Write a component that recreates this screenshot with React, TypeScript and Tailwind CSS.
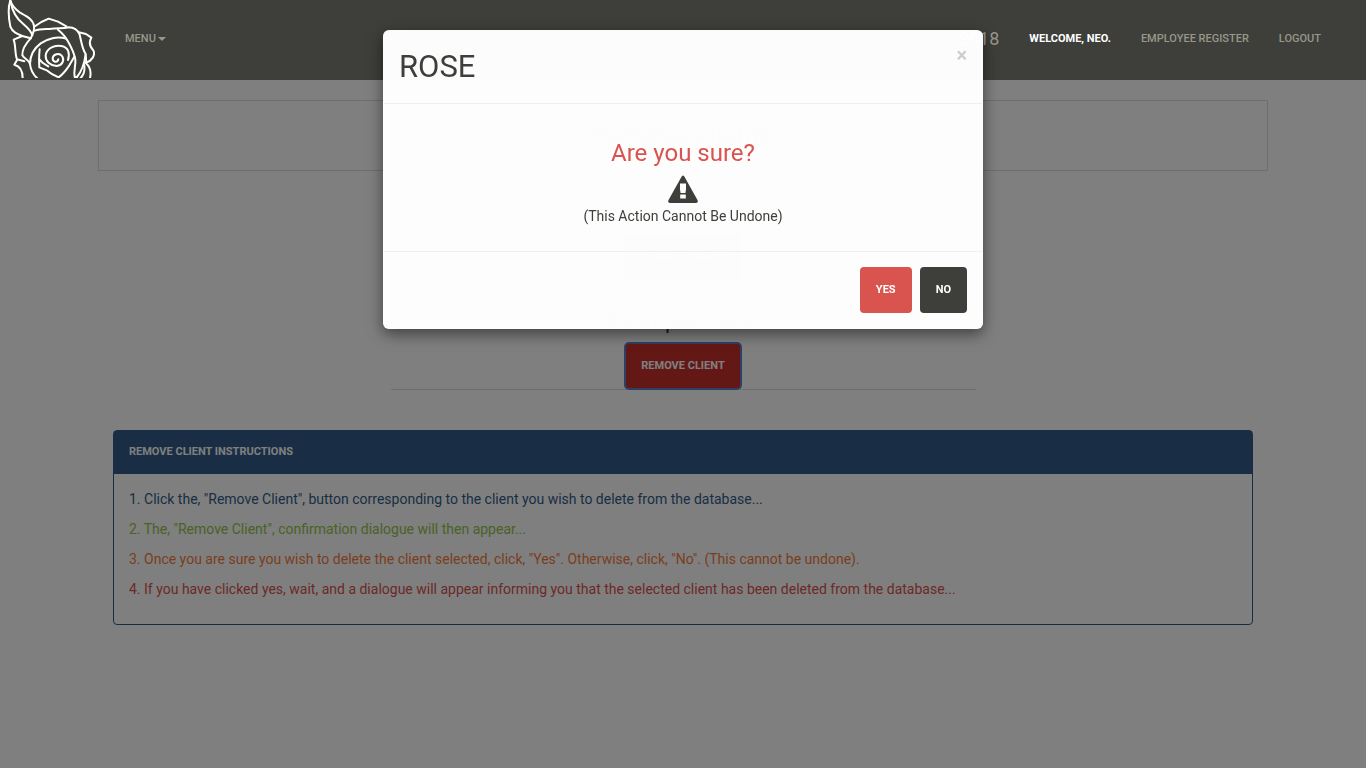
import React from "react";

const clients = [
  { name: "Client", active: false },
  { name: "Example Client", active: true },
];

const instructions = [
  {
    color: "text-[#325d88]",
    text: '1. Click the, "Remove Client", button corresponding to the client you wish to delete from the database...',
  },
  {
    color: "text-[#93c54b]",
    text: '2. The, "Remove Client", confirmation dialogue will then appear...',
  },
  {
    color: "text-[#f47c3c]",
    text: '3. Once you are sure you wish to delete the client selected, click, "Yes". Otherwise, click, "No". (This cannot be undone).',
  },
  {
    color: "text-[#d9534f]",
    text: "4. If you have clicked yes, wait, and a dialogue will appear informing you that the selected client has been deleted from the database...",
  },
];

function RoseLogo() {
  return (
    <svg
      className="block h-[78px] w-[95px]"
      viewBox="0 0 285 234"
      fill="none"
      stroke="#ffffff"
      strokeWidth="6"
      strokeLinecap="round"
      strokeLinejoin="round"
      role="img"
      aria-label="Rose"
    >
      <path d="M31 1C24 22 25 50 31 80C37 96 52 102 67 108L92 115" />
      <path d="M31 1C35 18 46 28 60 38C82 50 99 58 102 78C104 90 100 100 92 115" />
      <path d="M32 6C38 40 52 58 70 72C84 84 94 95 97 106" />
      <path d="M106 78L124 66L146 56L174 65L199 79" />
      <path d="M104 92C122 84 140 88 154 86C176 84 190 86 206 82C224 82 234 92 239 104C244 124 246 146 257 162C254 186 248 210 231 231" />
      <path d="M67 108L41 119C48 138 44 160 51 178L73 184" />
      <path d="M92 115C76 132 66 148 67 166C74 178 86 178 90 192" />
      <path d="M51 180L43 194C60 198 68 212 68 234" />
      <path d="M174 89C190 102 198 112 205 126C214 142 222 158 226 178C228 196 220 212 224 231L231 231" />
      <path d="M198 116C172 108 142 116 122 130C98 148 90 170 90 192C92 210 100 224 111 234" />
      <path d="M119 148C117 164 117 184 118 202L142 212C153 222 166 228 176 232C190 222 200 208 208 196L223 170" />
      <path d="M118 178C126 190 136 194 145 199" />
      <path d="M204 180C210 160 206 142 184 138C162 134 140 146 137 166C136 184 150 196 170 198C188 196 194 180 186 168C178 158 160 162 158 174C157 186 172 190 175 178" />
      <path d="M236 97L258 102L274 113C266 126 268 138 280 151C287 166 276 182 258 188" />
      <path d="M257 164C258 174 259 182 258 190C272 202 274 216 270 234" />
      <path d="M252 192C256 212 250 226 242 234" />
    </svg>
  );
}

function WarningIcon() {
  return (
    <svg className="block h-[30px] w-[30px]" viewBox="0 0 30 30" aria-hidden="true">
      <path
        fill="#3e3f3a"
        fillRule="evenodd"
        d="M13.8 1.2Q15 -.4 16.2 1.2L29.6 25.3Q30.5 28 28 28H2Q-.5 28 .4 25.3ZM12 8.6H18V14.6L17.4 18H12.6L12 14.6ZM12.2 19.4H17.8V23.6H12.2Z"
      />
    </svg>
  );
}

const navLink = "px-[15px] text-[11px] leading-5 font-medium uppercase";

function Navbar() {
  return (
    <nav className="fixed inset-x-0 top-0 z-20 flex h-20 justify-between bg-[#3e3f3a] text-[#98978b]">
      <div className="flex">
        <a href="#home" className="block">
          <RoseLogo />
        </a>
        <button type="button" className={`${navLink} ml-[15px] flex h-[78px] items-center gap-0.5`}>
          Menu
          <span className="border-x-4 border-t-4 border-x-transparent border-t-current" />
        </button>
      </div>
      <div className="flex h-[78px] items-center pr-[30px]">
        <span className="px-[15px] text-[18px] leading-5">2018</span>
        <span className="px-[15px] text-[11px] leading-5 font-bold text-white uppercase">Welcome, Neo.</span>
        <a href="#register" className={navLink}>
          Employee Register
        </a>
        <a href="#logout" className={navLink}>
          Logout
        </a>
      </div>
    </nav>
  );
}

function ClientRow({ name, active }: { name: string; active: boolean }) {
  return (
    <li className="flex flex-col items-center border-b border-[#dddddd] pt-[27px]">
      <h3 className="mb-[9px] text-[22px] leading-[26px]">{name}</h3>
      <button
        type="button"
        className={
          active
            ? "h-[46px] rounded bg-[#c9302c] px-4 text-[11px] font-bold text-white uppercase outline-2 -outline-offset-1 outline-[#6080c8]"
            : "h-[46px] rounded bg-[#d9534f] px-4 text-[11px] font-bold text-white uppercase"
        }
      >
        Remove Client
      </button>
    </li>
  );
}

function ConfirmDialog() {
  return (
    <div className="fixed inset-0 z-30 overflow-hidden">
      <div
        role="dialog"
        aria-modal="true"
        aria-labelledby="dialog-title"
        className="mx-auto mt-[30px] max-w-[600px] rounded-md bg-white/99 p-px shadow-[0_5px_15px_rgba(0,0,0,0.5)]"
      >
        <div className="flex items-start justify-between border-b border-[#f0f0f0] p-[15px]">
          <h2 id="dialog-title" className="text-[31px] leading-[42px]">
            ROSE
          </h2>
          <button type="button" aria-label="Close" className="text-[20px] leading-[18px] font-bold text-[#cccccc]">
            ×
          </button>
        </div>
        <div className="flex flex-col items-center px-[15px] pt-[36px] pb-[25px]">
          <h3 className="mb-[9px] text-2xl leading-[26px] text-[#d9534f]">Are you sure?</h3>
          <WarningIcon />
          <p className="mt-px text-sm leading-5">(This Action Cannot Be Undone)</p>
        </div>
        <div className="flex justify-end gap-2 border-t border-[#f0f0f0] p-[15px]">
          <button type="button" className="h-[46px] rounded bg-[#d9534f] px-4 text-[11px] font-bold text-white">
            YES
          </button>
          <button type="button" className="h-[46px] rounded bg-[#3e3f3a] px-4 text-[11px] font-bold text-white">
            NO
          </button>
        </div>
      </div>
    </div>
  );
}

export default function App() {
  return (
    <div className="min-h-screen bg-white font-[Roboto,sans-serif] text-sm text-[#3e3f3a]">
      <Navbar />
      <main className="mx-auto max-w-[1170px] pt-[100px]">
        <header className="border border-[#dddddd] py-[18px] text-center">
          <h1 className="text-[26px] leading-[33px]">Remove Clients</h1>
        </header>
        <ul className="mx-auto mt-px w-1/2">
          {clients.map((client) => (
            <ClientRow key={client.name} name={client.name} active={client.active} />
          ))}
        </ul>
        <section className="mx-[15px] mt-10 rounded border border-[#325d88]">
          <h2 className="bg-[#325d88] px-[15px] pt-[11px] pb-3 text-[11px] leading-5 font-bold text-white uppercase">
            Remove Client Instructions
          </h2>
          <div className="flex flex-col gap-2.5 px-[15px] pt-[15px] pb-[25px] leading-5">
            {instructions.map((item) => (
              <p key={item.text} className={item.color}>
                {item.text}
              </p>
            ))}
          </div>
        </section>
      </main>
      <div className="fixed inset-0 z-10 bg-black/50" />
      <ConfirmDialog />
    </div>
  );
}
